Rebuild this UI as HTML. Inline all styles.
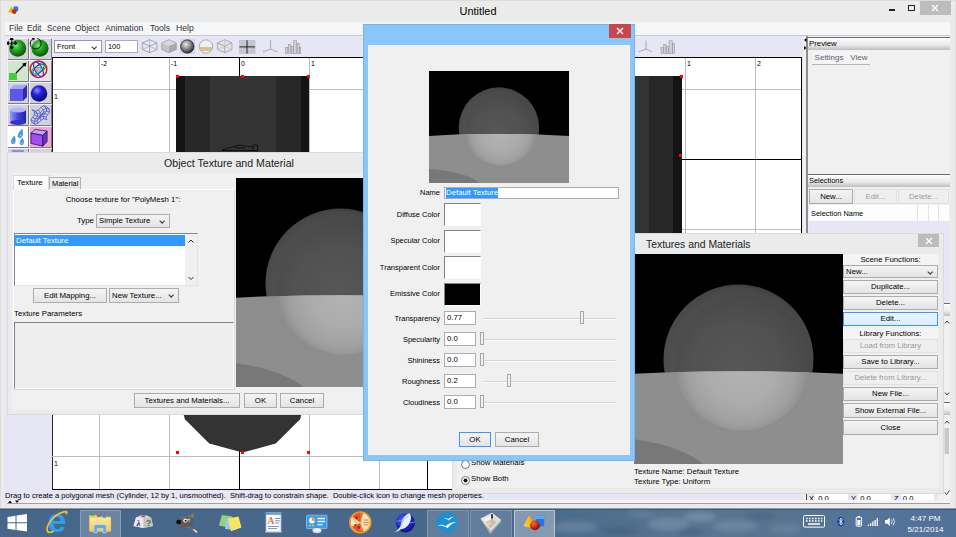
<!DOCTYPE html>
<html><head><meta charset="utf-8">
<style>
*{box-sizing:border-box;margin:0;padding:0}
html,body{width:956px;height:537px;overflow:hidden;background:#4a6c8e;font-family:"Liberation Sans",sans-serif;font-size:7.8px;color:#000}
.a{position:absolute}
.t{position:absolute;white-space:pre;line-height:10px;height:10px}
.c{text-align:center}
.r{text-align:right}
.btn{position:absolute;border:1px solid #acacac;background:linear-gradient(#f4f4f4,#e4e4e4);text-align:center;line-height:12px;white-space:pre}
.btn.dis{color:#9a9a9a;border-color:#e0e0e0;background:#efefef}
.btn.hot{border-color:#3399ff;background:linear-gradient(#ecf4fc,#dcecfc)}
.tf{position:absolute;border:1px solid #abadb3;background:#fff;line-height:11px;padding-left:2px;white-space:pre}
.cb{position:absolute;border:1px solid #acacac;background:linear-gradient(#f4f4f4,#e4e4e4);line-height:12px;padding-left:2px;white-space:pre}
.cb:after{content:"";position:absolute;right:4.5px;top:3.5px;width:3.4px;height:3.4px;border-right:1px solid #333;border-bottom:1px solid #333;transform:rotate(45deg) scale(1,1)}
.gl{position:absolute;background:#bcbcbc}
.ph{position:absolute;height:13px;background:linear-gradient(#fdfdfd,#e9e9e9 60%,#bdbdbd);border-top:1px solid #6e6e6e;line-height:12px;padding-left:1px;white-space:pre}
.tb{position:absolute;width:22px;height:22px;background:#d2d2d8;border:1px solid;border-color:#f4f4f8 #777 #777 #f4f4f8}
.sw{position:absolute;width:27px;height:17px;border:1px solid #7a7a7a;border-right-color:#d0d0d0;border-bottom-color:#d0d0d0;background:#fff}
.trk{position:absolute;height:1px;background:#d6d6d6;border-bottom:1px solid #fcfcfc;box-sizing:content-box}
.thm{position:absolute;width:4px;height:13px;border:1px solid #a6a6a6;background:#f2f2f2}
</style></head>
<body>
<!-- sphere scene symbol -->
<svg width="0" height="0" style="position:absolute">
<defs>
<radialGradient id="gU" gradientUnits="userSpaceOnUse" cx="102" cy="116" r="86">
<stop offset="0" stop-color="#5b5b5b"/><stop offset="0.5" stop-color="#555"/><stop offset="0.82" stop-color="#4d4d4d"/><stop offset="0.95" stop-color="#474747"/><stop offset="1" stop-color="#3e3e3e"/>
</radialGradient>
<radialGradient id="gL" gradientUnits="userSpaceOnUse" cx="108" cy="115" r="68">
<stop offset="0" stop-color="#b3b3b3"/><stop offset="0.5" stop-color="#acacac"/><stop offset="0.8" stop-color="#a0a0a0"/><stop offset="0.93" stop-color="#939393"/><stop offset="1" stop-color="#898989"/>
</radialGradient>
<radialGradient id="gR" gradientUnits="userSpaceOnUse" cx="104.5" cy="105.5" r="75">
<stop offset="0.86" stop-color="#fff" stop-opacity="0"/><stop offset="0.97" stop-color="#fff" stop-opacity="0.07"/><stop offset="1" stop-color="#fff" stop-opacity="0.02"/>
</radialGradient>
<clipPath id="cSky"><path d="M-30,121.9 Q104.5,112.4 240,121.9 L240,0 L-30,0Z"/></clipPath>
<clipPath id="cGnd"><path d="M-30,121.9 Q104.5,112.4 240,121.9 L240,210 L-30,210Z"/></clipPath>
<clipPath id="cS"><circle cx="104.5" cy="105.5" r="75"/></clipPath>
<filter id="bl2" x="-5%" y="-5%" width="110%" height="110%"><feGaussianBlur stdDeviation="0.7"/></filter>
<filter id="bl" x="-10%" y="-10%" width="120%" height="120%"><feGaussianBlur stdDeviation="1.2"/></filter>
<g id="scene">
<rect x="-30" y="0" width="270" height="210" fill="#000"/>
<path d="M-30,121.6 Q104.5,112.1 240,121.6 L240,210 L-30,210Z" fill="#8e8e8e"/>
<ellipse cx="-40" cy="227.5" rx="118" ry="45" fill="#787878"/>
<g clip-path="url(#cSky)"><circle cx="104.5" cy="105.5" r="75" fill="url(#gU)"/></g>
<g clip-path="url(#cS)">
<circle cx="109" cy="110" r="68" fill="#000" opacity="0.035" filter="url(#bl)"/>
<g clip-path="url(#cGnd)">
<rect x="20" y="100" width="170" height="90" fill="#8d8d8d"/>
<circle cx="108" cy="109" r="67.5" fill="url(#gL)" filter="url(#bl2)"/>
</g>
</g>
</g>
</defs>
</svg>

<!-- ================= MAIN WINDOW ================= -->
<div class="a" id="win" style="left:0;top:0;width:956px;height:509px;background:#ebebeb;box-shadow:inset 0 0 0 1px #dcdcdc"></div>
<div class="t c" style="left:428px;top:4px;width:100px;font-size:10.9px;line-height:14px;height:14px">Untitled</div>
<svg class="a" style="left:7px;top:5px" width="12" height="10" viewBox="0 1.5 15 11"><rect x="8" y="2.5" width="6" height="6" rx="0.8" fill="#2a7ae0"/><path d="M5.5,2.5 L9.5,9.5 q-4,2 -8,0z" fill="#f5b000"/><circle cx="9" cy="9" r="3" fill="#c8281a"/></svg>
<!-- window buttons -->
<div class="a" style="left:920px;top:1px;width:31px;height:14px;background:#bcbcbc"></div>
<svg class="a" style="left:931px;top:4px" width="8" height="8"><path d="M1,1 L7,7 M7,1 L1,7" stroke="#fff" stroke-width="1.4"/></svg>
<div class="a" style="left:908px;top:5px;width:7px;height:6px;border:1px solid #222;border-top-width:1.5px"></div>
<div class="a" style="left:889px;top:9px;width:6px;height:2px;background:#222"></div>
<!-- menubar -->
<div class="a" style="left:5px;top:22px;width:945px;height:13px;background:#f5f6f7"></div>
<div class="t" style="left:9px;top:23px;font-size:8.6px;line-height:11px;color:#333">File</div><div class="t" style="left:27px;top:23px;font-size:8.4px;line-height:11px;color:#333">Edit</div><div class="t" style="left:47px;top:23px;font-size:8.4px;line-height:11px;color:#333">Scene</div><div class="t" style="left:75px;top:23px;font-size:8.4px;line-height:11px;color:#333">Object</div><div class="t" style="left:105px;top:23px;font-size:8.6px;line-height:11px;color:#333">Animation</div><div class="t" style="left:150px;top:23px;font-size:8.6px;line-height:11px;color:#333">Tools</div><div class="t" style="left:176px;top:23px;font-size:8.6px;line-height:11px;color:#333">Help</div>
<!-- content bg -->
<div class="a" style="left:5px;top:35px;width:945px;height:468px;background:#e6e6f5"></div>
<div class="a" style="left:5px;top:35px;width:945px;height:1px;background:#c9c9d4"></div>

<!-- VIEWPORTS -->
<div class="a" id="vp1" style="left:52px;top:57px;width:376px;height:205px;background:#fff;border-top:1px solid #000;overflow:hidden"></div>
<div class="a" id="vp3" style="left:52px;top:284px;width:376px;height:206px;background:#fff;border-bottom:1px solid #000;overflow:hidden"></div>
<div class="a" id="vp4" style="left:428px;top:284px;width:374px;height:206px;background:#fff;border-bottom:1px solid #000"></div>
<div class="a" id="vp2" style="left:428px;top:57px;width:374px;height:205px;background:#fff;border-top:1px solid #000;overflow:hidden"></div>


<!-- VP1 front -->
<div class="gl" style="left:99px;top:58px;width:1px;height:204px"></div>
<div class="gl" style="left:169px;top:58px;width:1px;height:204px"></div>
<div class="gl" style="left:309px;top:58px;width:1px;height:204px"></div>
<div class="gl" style="left:379px;top:58px;width:1px;height:204px"></div>
<div class="gl" style="left:52px;top:89px;width:376px;height:1px"></div>
<div class="a" style="left:239px;top:58px;width:1px;height:204px;background:#000"></div>
<div class="t" style="left:101px;top:59px;font-size:7px">-2</div>
<div class="t" style="left:171px;top:59px;font-size:7px">-1</div>
<div class="t" style="left:241px;top:59px;font-size:7px">0</div>
<div class="t" style="left:311px;top:59px;font-size:7px">1</div>
<div class="t" style="left:54px;top:92px;font-size:7px">1</div>
<div class="a" style="left:176px;top:76px;width:133px;height:167px;background:linear-gradient(90deg,#141414 0,#141414 9px,#282828 9px,#282828 34px,#333 34px,#333 100px,#282828 100px,#282828 125px,#141414 125px)"></div>
<svg class="a" style="left:220px;top:140px" width="42" height="14"><path d="M2,10 L12,7 L19,5 L25,6 L33,7 M33,5 h4.5 v5.5 h-4.5z M2,10.5 L33,10.5 M14,6.5 l3,1.5 l8,0" fill="none" stroke="#000" stroke-width="0.7"/></svg>
<div class="a" style="left:176px;top:75px;width:3px;height:3px;background:#f00"></div>
<div class="a" style="left:241px;top:75px;width:3px;height:3px;background:#f00"></div>
<div class="a" style="left:307px;top:75px;width:3px;height:3px;background:#f00"></div>
<div class="a" style="left:427px;top:57px;width:1px;height:433px;background:#000"></div>
<div class="a" style="left:52px;top:57px;width:1px;height:433px;background:#222"></div>
<!-- VP3 top -->
<div class="gl" style="left:99px;top:284px;width:1px;height:205px"></div>
<div class="gl" style="left:169px;top:284px;width:1px;height:205px"></div>
<div class="gl" style="left:309px;top:284px;width:1px;height:205px"></div>
<div class="gl" style="left:379px;top:284px;width:1px;height:205px"></div>
<div class="gl" style="left:52px;top:456px;width:376px;height:1px"></div>
<div class="a" style="left:239px;top:284px;width:1px;height:205px;background:#000"></div>
<div class="t" style="left:54px;top:459px;font-size:7px">1</div>
<svg class="a" style="left:170px;top:315px" width="146" height="142"><polygon points="72.5,137.5 105.75,128.6 130.1,104.25 139,71 130.1,37.75 105.75,13.4 72.5,4.5 39.25,13.4 14.9,37.75 6,71 14.9,104.25 39.25,128.6" fill="#333"/></svg>
<div class="a" style="left:176px;top:451px;width:3px;height:3px;background:#f00"></div>
<div class="a" style="left:241px;top:451px;width:3px;height:3px;background:#f00"></div>
<div class="a" style="left:307px;top:451px;width:3px;height:3px;background:#f00"></div>
<!-- VP2 side -->
<div class="gl" style="left:685px;top:58px;width:1px;height:204px"></div>
<div class="gl" style="left:755px;top:58px;width:1px;height:204px"></div>
<div class="gl" style="left:430px;top:89px;width:372px;height:1px"></div>
<div class="gl" style="left:430px;top:229px;width:372px;height:1px"></div>
<div class="gl" style="left:430px;top:159px;width:372px;height:1px;background:#000"></div>
<div class="t" style="left:687px;top:59px;font-size:7px">1</div>
<div class="t" style="left:757px;top:59px;font-size:7px">2</div>
<div class="a" style="left:549px;top:76px;width:133px;height:167px;background:linear-gradient(90deg,#141414 0,#141414 9px,#282828 9px,#282828 34px,#333 34px,#333 100px,#282828 100px,#282828 124px,#141414 124px)"></div>
<div class="a" style="left:680px;top:75px;width:3px;height:3px;background:#f00"></div>
<div class="a" style="left:679px;top:154px;width:3px;height:3px;background:#f00"></div>
<div class="a" style="left:801px;top:57px;width:1px;height:433px;background:#000"></div>
<!-- splitter + right panel -->
<div class="a" style="left:803px;top:36px;width:4px;height:467px;background:#f0f0f0"></div>
<div class="a" style="left:806px;top:36px;width:2px;height:467px;background:#8c8c8c"></div>
<div class="a" style="left:808px;top:36px;width:142px;height:467px;background:#f0f0f0"></div>
<svg class="a" style="left:803px;top:37px" width="4" height="14"><path d="M3.5,1 L1,3 L3.5,5Z M1,9 L3.5,11 L1,13Z" fill="#000"/></svg>
<div class="ph" style="left:808px;top:37px;width:142px">Preview</div>
<div class="a" style="left:812px;top:51px;width:58px;height:13px;background:#f4f4f4"></div><div class="t" style="left:814.6px;top:53px;font-size:8px;color:#5a6472">Settings</div><div class="t" style="left:850.3px;top:53px;font-size:8px;color:#5a6472">View</div>
<div class="a" style="left:812px;top:64px;width:58px;height:1px;background:#b4b4b4"></div>
<div class="ph" style="left:808px;top:174px;width:142px;font-size:7.4px">Selections</div>
<div class="btn" style="left:809px;top:189px;width:44px;height:15px;line-height:13px">New...</div>
<div class="btn dis" style="left:854px;top:189px;width:43px;height:15px;line-height:13px">Edit...</div>
<div class="btn dis" style="left:898px;top:189px;width:51px;height:15px;line-height:13px">Delete...</div>
<div class="a" style="left:809px;top:205px;width:140px;height:16px;background:#fdfdfd"></div>
<div class="t" style="left:811px;top:209px;font-size:7.4px">Selection Name</div>
<div class="a" style="left:917px;top:205px;width:1px;height:16px;background:#dfe5f0"></div>
<div class="a" style="left:928px;top:205px;width:1px;height:16px;background:#dfe5f0"></div>
<div class="a" style="left:938px;top:205px;width:1px;height:16px;background:#dfe5f0"></div>
<div class="a" style="left:809px;top:221px;width:141px;height:270px;background:#e6e6f5"></div>

<!-- TOOLBAR -->
<div class="cb" style="left:54px;top:40px;width:48px;height:13px;line-height:11px;background:#fff;border-color:#9a9aa6">Front</div>
<div class="tf" style="left:105px;top:40px;width:33px;height:13px;font-size:7.4px">100</div>
<svg class="a" style="left:140px;top:37.6px" width="165" height="19" fill="none">
<g stroke="#8c8c8c" stroke-width="0.7"><path d="M9.6,1.7 L17.0,4.9 L17.0,11.5 L9.6,14.7 L2.4,11.5 L2.4,4.9Z M2.4,4.9 L9.6,8.1 L17.0,4.9 M9.6,8.1 L9.6,14.7"/><path d="M9.6,1.7 L9.6,8.3 L2.4,11.5 M9.6,8.3 L17.0,11.5" stroke-opacity="0.6"/></g>
<path d="M28.9,1.7 L36.3,4.9 L28.9,8.1 L21.7,4.9Z" fill="#dadada"/><path d="M21.7,4.9 L28.9,8.1 L28.9,14.7 L21.7,11.5Z" fill="#c4c4c4"/><path d="M36.3,4.9 L28.9,8.1 L28.9,14.7 L36.3,11.5Z" fill="#ababab"/><path d="M28.9,1.7 L36.3,4.9 L36.3,11.5 L28.9,14.7 L21.7,11.5 L21.7,4.9Z" stroke="#8c8c8c" stroke-width="0.6"/>
<rect x="39.8" y="1.2" width="15.2" height="14.8" fill="#d6d6e2"/><circle cx="47.3" cy="8.5" r="6.7" fill="url(#gSph)" stroke="#1a1a1a" stroke-width="0.7"/>
<clipPath id="hsC"><circle cx="66" cy="8.5" r="6.5"/></clipPath><circle cx="66" cy="8.5" r="6.7" fill="#eef2f6" stroke="#8c8c8c" stroke-width="0.7"/><rect x="59" y="9" width="14" height="4" fill="#d9c08e" clip-path="url(#hsC)"/>
<path d="M84.6,1.7 L92.0,4.9 L92.0,11.5 L84.6,14.7 L77.4,11.5 L77.4,4.9Z" fill="#e2e2e4" stroke="#9a9a9a" stroke-width="0.7"/><path d="M77.4,4.9 L84.6,8.1 L92.0,4.9 M84.6,8.1 L84.6,14.7" stroke="#9a9a9a" stroke-width="0.7"/><path d="M84.6,1.7 L84.6,8.3 L77.4,11.5 M84.6,8.3 L92.0,11.5" stroke="#b8b8b8" stroke-width="0.5"/>
<path d="M99.8,2.2V15.6M101.5,2.2V15.6M103.2,2.2V15.6M104.9,2.2V15.6M106.6,2.2V15.6M108.3,2.2V15.6M110.0,2.2V15.6M111.7,2.2V15.6M113.4,2.2V15.6M115.1,2.2V15.6M99.4,2.6H115M99.4,4.2H115M99.4,5.8H115M99.4,7.4H115M99.4,9.0H115M99.4,10.6H115M99.4,12.2H115M99.4,13.8H115M99.4,15.4H115" stroke="#9a9a9a" stroke-width="0.4"/><path d="M99.4,8.9H115M107,2.2V15.6" stroke="#111" stroke-width="0.9"/>
<path d="M130.6,2.6V11L123.4,13.8M130.6,11L136.4,13.8" stroke="#9a9a9a" stroke-width="0.8"/><path d="M129.8,2.6h1.6M123,13h1v1.4M136,13h1v1.4" stroke="#aaa" stroke-width="0.6"/>
<g fill="#c4c4c8" fill-opacity="0.7" stroke="#8e8e8e" stroke-width="0.5"><rect x="145.6" y="9.5" width="2.2" height="6"/><rect x="148.4" y="6.5" width="2.2" height="9"/><rect x="151.2" y="8.5" width="2" height="7"/><rect x="153.6" y="2.8" width="3.2" height="12.8"/><rect x="157.2" y="5.5" width="2" height="10"/><rect x="159.4" y="9.5" width="1.4" height="6"/></g>
</svg>
<!-- VP2 toolbar icons (visible part) -->
<svg class="a" style="left:636px;top:37.6px" width="40" height="19" fill="none"><path d="M10,2.6V11L2.8,13.8M10,11L15.8,13.8" stroke="#9a9a9a" stroke-width="0.8"/><g fill="#c4c4c8" fill-opacity="0.7" stroke="#8e8e8e" stroke-width="0.5"><rect x="25" y="9.5" width="2.2" height="6"/><rect x="27.8" y="6.5" width="2.2" height="9"/><rect x="30.6" y="8.5" width="2" height="7"/><rect x="33" y="2.8" width="3.2" height="12.8"/><rect x="36.6" y="5.5" width="2" height="10"/></g></svg>
<!-- TOOL PALETTE -->
<div class="a" style="left:7px;top:38px;width:45px;height:118px;background:#d2d2d8"></div>
<svg class="a" style="left:7px;top:38px" width="45" height="120">
<defs>
<radialGradient id="gSph" cx="0.4" cy="0.35" r="0.7"><stop offset="0" stop-color="#e8e8e8"/><stop offset="0.5" stop-color="#888"/><stop offset="1" stop-color="#222"/></radialGradient>
<radialGradient id="gGr" cx="0.4" cy="0.35" r="0.7"><stop offset="0" stop-color="#7be07b"/><stop offset="0.45" stop-color="#1fa01f"/><stop offset="1" stop-color="#064d06"/></radialGradient>
<radialGradient id="gBl" cx="0.38" cy="0.32" r="0.7"><stop offset="0" stop-color="#8c8cff"/><stop offset="0.4" stop-color="#2222dd"/><stop offset="1" stop-color="#0a0a70"/></radialGradient>
<linearGradient id="gCy" x1="0" x2="1"><stop offset="0" stop-color="#9a9aff"/><stop offset="0.5" stop-color="#4444dd"/><stop offset="1" stop-color="#2020a0"/></linearGradient>
</defs>
<!-- button frames -->
<g fill="none" stroke-width="1">
<path d="M0.5,21.5V0.5H21.5 M22.5,21.5V0.5H44 M0.5,43.5V22.5H21.5 M22.5,43.5V22.5H44 M0.5,65.5V44.5H21.5 M22.5,65.5V44.5H44 M0.5,87.5V66.5H21.5 M22.5,87.5V66.5H44 M0.5,109.5V88.5H21.5 M22.5,109.5V88.5H44 M0.5,120V110.5H21.5 M22.5,120V110.5H44" stroke="#f2f2f6"/>
<path d="M21.5,1V21.5H1 M44.5,1V21.5H23 M21.5,23V43.5H1 M44.5,23V43.5H23 M21.5,45V65.5H1 M44.5,45V65.5H23 M21.5,67V87.5H1 M44.5,67V87.5H23 M21.5,89V109.5H1 M44.5,89V109.5H23 M21.5,111V120 M44.5,111V120" stroke="#7c7c84"/>
</g>
<!-- r1 -->
<g transform="translate(-1.3,-1.8)"><circle cx="12" cy="12" r="8.5" fill="url(#gGr)"/>
<path d="M6,2 V12 M1.5,7 H10.5 M6,1 l-1.6,2.2 h3.2z M6,13 l-1.6,-2.2 h3.2z M0.5,7 l2.2,-1.6 v3.2z M11.5,7 l-2.2,-1.6 v3.2z" stroke="#000" stroke-width="0.9" fill="#000"/>
<circle cx="34.3" cy="12" r="8.5" fill="url(#gGr)"/>
<path transform="translate(-1.5,0)" d="M27.5,3.5 A5.5,5.5 0 1 0 33,2" stroke="#000" stroke-width="0.9" fill="none"/><path d="M26,1.5 l3.5,0.5 l-2.2,2.6z" fill="#000"/>
</g>
<!-- r2 -->
<rect x="1" y="23" width="20" height="20" fill="#cfe6cf"/>
<rect x="2" y="35" width="8" height="7" fill="#3fcf3f"/>
<path d="M9,35 L18,26" stroke="#000" stroke-width="1.2"/><path d="M19.5,24.5 l-4.5,1.2 l3.3,3.3z" fill="#000"/>
<rect x="23" y="23" width="21" height="20" fill="#e4e4ea"/>
<g transform="translate(-2,-1.8)"><circle cx="33.5" cy="33" r="8.3" fill="none" stroke="#e01818" stroke-width="1.5"/>
<ellipse cx="33.5" cy="33" rx="3.6" ry="8" fill="none" stroke="#2030d8" stroke-width="1.1" transform="rotate(-28 33.5 33)"/>
<ellipse cx="33.5" cy="33" rx="8" ry="3.4" fill="none" stroke="#18a018" stroke-width="1.1" transform="rotate(-28 33.5 33)"/>
<ellipse cx="33.5" cy="33" rx="3.4" ry="8" fill="none" stroke="#2030d8" stroke-width="0.9" transform="rotate(40 33.5 33)"/>
<rect x="31.5" y="31" width="4" height="4" fill="#bbb" stroke="#777" stroke-width="0.5"/>
</g>
<!-- r3 -->
<path d="M3,51 L7,47 L20,47 L16,51Z" fill="#a6a6ff"/><rect x="3" y="51" width="13" height="12" fill="#5a5ae6"/><path d="M16,51 L20,47 L20,59 L16,63Z" fill="#2c2cb0"/>
<circle cx="32" cy="55.5" r="8.3" fill="url(#gBl)"/>
<!-- r4 -->
<rect x="3" y="72" width="16" height="12.5" fill="url(#gCy)"/><ellipse cx="11" cy="84.5" rx="8" ry="2.4" fill="#3535c4"/><ellipse cx="11" cy="72" rx="8" ry="2.6" fill="#b4b4ff"/>
<g stroke="#3a4ad0" stroke-width="0.75" fill="none"><path d="M25.0,71.5 L26.2,72.3 L27.5,72.8 L28.8,73.0 L30.0,72.7 L31.2,71.9 L32.5,70.8 L33.8,69.6 L35.0,68.7 L36.2,68.0 L37.5,67.9 L38.8,68.3 L40.0,68.9 M27.3,74.1 L28.5,74.9 L29.8,75.4 L31.0,75.6 L32.3,75.3 L33.5,74.5 L34.8,73.4 L36.0,72.2 L37.3,71.3 L38.5,70.6 L39.8,70.5 L41.0,70.9 L42.3,71.5 M27.4,76.7 L28.6,77.5 L29.9,78.0 L31.1,78.2 L32.4,77.9 L33.6,77.1 L34.9,76.0 L36.1,74.8 L37.4,73.9 L38.6,73.2 L39.9,73.1 L41.1,73.5 L42.4,74.1 M25.6,79.3 L26.8,80.1 L28.1,80.6 L29.3,80.8 L30.6,80.5 L31.8,79.7 L33.1,78.6 L34.3,77.4 L35.6,76.5 L36.8,75.8 L38.1,75.7 L39.3,76.1 L40.6,76.7 M24.1,81.9 L25.4,82.7 L26.6,83.2 L27.9,83.4 L29.1,83.1 L30.4,82.3 L31.6,81.2 L32.9,80.0 L34.1,79.1 L35.4,78.4 L36.6,78.3 L37.9,78.7 L39.1,79.3 M24.9,84.5 L26.2,85.3 L27.4,85.8 L28.7,86.0 L29.9,85.7 L31.2,84.9 L32.4,83.8 L33.7,82.6 L34.9,81.7 L36.2,81.0 L37.4,80.9 L38.7,81.3 L39.9,81.9 M25.0,71.5 L26.1,72.6 L27.0,73.7 L27.5,74.8 L27.6,75.8 L27.3,76.9 L26.6,78.0 L25.7,79.1 L24.9,80.2 L24.3,81.2 L24.1,82.3 L24.3,83.4 L24.9,84.5 M28.0,73.0 L29.1,74.0 L30.0,75.1 L30.5,76.2 L30.6,77.3 L30.3,78.4 L29.6,79.5 L28.7,80.5 L27.9,81.6 L27.3,82.7 L27.1,83.8 L27.3,84.9 L27.9,86.0 M31.0,72.1 L32.1,73.1 L33.0,74.2 L33.5,75.3 L33.6,76.4 L33.3,77.5 L32.6,78.6 L31.7,79.6 L30.9,80.7 L30.3,81.8 L30.1,82.9 L30.3,84.0 L30.9,85.1 M34.0,69.4 L35.1,70.5 L36.0,71.6 L36.5,72.7 L36.6,73.7 L36.3,74.8 L35.6,75.9 L34.7,77.0 L33.9,78.1 L33.3,79.2 L33.1,80.2 L33.3,81.3 L33.9,82.4 M37.0,67.9 L38.1,69.0 L39.0,70.1 L39.5,71.2 L39.6,72.2 L39.3,73.3 L38.6,74.4 L37.7,75.5 L36.9,76.6 L36.3,77.7 L36.1,78.7 L36.3,79.8 L36.9,80.9 M40.0,68.9 L41.1,70.0 L42.0,71.1 L42.5,72.2 L42.6,73.3 L42.3,74.4 L41.6,75.4 L40.7,76.5 L39.9,77.6 L39.3,78.7 L39.1,79.8 L39.3,80.9 L39.9,81.9"/></g>
<!-- r5 -->
<rect x="1" y="89" width="20" height="20" fill="#fff"/>
<path d="M15.5,90.5 q-6,5 -4.6,8.6 q2.6,2.6 4.6,-1 q1,-3 0,-7.6z M7.5,97.5 q-4.6,4.6 -3.2,7.8 q2.6,2.4 4.2,-1 q0.8,-3 -1,-6.8z M15.6,99.5 q-3.8,4 -2.6,6.8 q2.4,2.2 3.8,-0.8 q0.6,-2.8 -1.2,-6z" fill="#4a9ae6"/><path d="M12.4,96.5 q0.6,1.6 2,1 M5.6,103.4 q0.6,1.4 1.8,1 M14,104.6 q0.6,1.2 1.6,0.8" stroke="#bfe0ff" stroke-width="0.7" fill="none"/>
<rect x="23" y="89" width="21" height="20" fill="#f4a6d4"/>
<g transform="translate(-2.5,0.5) translate(34.5,99) scale(1.08) translate(-34.5,-99)"><path d="M27,95 L31,91.5 L42,93 L38,97Z" fill="#c9a0ff" stroke="#201060" stroke-width="0.7"/><path d="M27,95 L38,97 L38,107 L27,104.5Z" fill="#a050f0" stroke="#201060" stroke-width="0.7"/><path d="M38,97 L42,93 L42,103 L38,107Z" fill="#7030c0" stroke="#201060" stroke-width="0.7"/>
</g>
<!-- r6 partial -->
<rect x="5" y="112" width="12" height="8" fill="#8a8aee"/>
</svg>


<!-- right strip details -->
<div class="a" style="left:809px;top:303px;width:141px;height:200px;background:#f0f0f0"></div>
<div class="ph" style="left:808px;top:303px;width:142px"></div>
<div class="ph" style="left:808px;top:402px;width:142px"></div>
<svg class="a" style="left:944px;top:316px" width="6" height="184" fill="none" stroke="#333" stroke-width="0.9"><path d="M1,7.5 L3,5 L5,7.5 M1,76.5 L3,79 L5,76.5 M1,107.5 L3,105 L5,107.5 M0.8,176.5 L2.6,178.5 L5.4,174.5"/><rect x="0.5" y="112" width="4.5" height="26" fill="#c8c8c8" stroke="none"/></svg>
<!-- xyz fields -->
<div class="a" style="left:807px;top:493px;width:131px;height:7px;background:#e6e6f5;overflow:hidden">
<div class="a" style="left:8px;top:0;width:33px;height:7px;background:#fff"></div>
<div class="a" style="left:51px;top:0;width:33px;height:7px;background:#fff"></div>
<div class="a" style="left:94px;top:0;width:33px;height:7px;background:#fff"></div>
<div class="t" style="left:2px;top:1px;font-size:7.6px">X  0.0</div>
<div class="t" style="left:44px;top:1px;font-size:7.6px">Y  0.0</div>
<div class="t" style="left:87px;top:1px;font-size:7.6px">Z  0.0</div>
</div>
<div class="a" style="left:806px;top:493px;width:1px;height:7px;background:#444"></div>

<!-- statusbar -->
<div class="a" style="left:7px;top:490px;width:796px;height:10px;background:#e6e6f5"></div>
<div class="t" style="left:5px;top:490.5px;font-size:7.57px">Drag to create a polygonal mesh (Cylinder, 12 by 1, unsmoothed).  Shift-drag to constrain shape.  Double-click icon to change mesh properties.</div>
<div class="a" style="left:7px;top:500px;width:943px;height:3px;background:#f4f4f4"></div>
<div class="a" style="left:7px;top:503px;width:943px;height:1px;background:#a0a0a0"></div>
<svg class="a" style="left:8px;top:500px" width="14" height="4"><path d="M0,3 L2,0.5 L4,3Z M7,0.5 L11,0.5 L9,3Z" fill="#000"/></svg>


<!-- ============ DIALOG 1: Object Texture and Material ============ -->
<div class="a" style="left:7px;top:152px;width:445px;height:263px;background:#ebebeb;border:1px solid #dadada"></div>
<div class="a" style="left:12px;top:173px;width:435px;height:237px;background:#f0f0f0"></div>
<div class="t c" style="left:129px;top:156px;width:200px;font-size:10.65px;line-height:14px;height:14px;color:#222">Object Texture and Material</div>
<!-- tabs -->
<div class="a" style="left:13px;top:189px;width:222px;height:201px;border:1px solid #d9d9d9;border-top-color:#fff;border-left-color:#fff;background:#f0f0f0"></div>
<div class="a" style="left:13px;top:175px;width:36px;height:15px;background:linear-gradient(#fff,#f6f6f6);border:1px solid #d9d9d9;border-bottom:none"></div>
<div class="a" style="left:49px;top:177px;width:32px;height:12px;background:linear-gradient(#f0f0f0,#e4e4e4);border:1px solid #b4b4b4;border-bottom:none"></div>
<div class="t" style="left:17px;top:178px">Texture</div>
<div class="t" style="left:52px;top:179px;font-size:7.4px">Material</div>
<div class="t c" style="left:23px;top:195px;width:200px">Choose texture for "PolyMesh 1":</div>
<div class="t" style="left:77px;top:216px">Type</div>
<div class="cb" style="left:96px;top:214px;width:74px;height:14px">Simple Texture</div>
<!-- list -->
<div class="a" style="left:14px;top:233px;width:184px;height:53px;background:#fff;border:1px solid;border-color:#828790 #e3e3e3 #e3e3e3 #828790"></div>
<div class="a" style="left:15px;top:235px;width:170px;height:11px;background:#3399ff"></div>
<div class="t" style="left:16px;top:236px;color:#fff">Default Texture</div>
<div class="a" style="left:185px;top:234px;width:12px;height:51px;background:#f0f0f0"></div>
<svg class="a" style="left:187px;top:238px" width="8" height="44" fill="none" stroke="#333" stroke-width="1"><path d="M1.5,4.5 L4,2 L6.5,4.5 M1.5,39 L4,41.5 L6.5,39"/></svg>
<div class="btn" style="left:33px;top:288px;width:74px;height:15px;line-height:13px">Edit Mapping...</div>
<div class="cb" style="left:109px;top:288px;width:70px;height:15px;line-height:13px">New Texture...</div>
<div class="t" style="left:14px;top:309px">Texture Parameters</div>
<div class="a" style="left:14px;top:322px;width:220px;height:67px;background:#eee;border:1px solid;border-color:#828282 #fff #fff #828282"></div>
<!-- preview -->
<svg class="a" style="left:236px;top:178px" width="209" height="209" viewBox="0 0 209 209"><use href="#scene"/></svg>
<div class="btn" style="left:134px;top:393px;width:106px;height:15px;line-height:13px">Textures and Materials...</div>
<div class="btn" style="left:244px;top:393px;width:33px;height:15px;line-height:13px">OK</div>
<div class="btn" style="left:280px;top:393px;width:44px;height:15px;line-height:13px">Cancel</div>


<!-- ============ DIALOG 2: Textures and Materials ============ -->
<div class="a" style="left:452px;top:233px;width:492px;height:261px;background:#ebebeb;border:1px solid #dadada"></div>
<div class="a" style="left:457px;top:254px;width:482px;height:234px;background:#f0f0f0"></div>
<div class="t" style="left:646px;top:237.8px;font-size:10.4px;line-height:14px;height:14px;color:#222">Textures and Materials</div>
<div class="a" style="left:918px;top:234px;width:21px;height:13px;background:#bcbcbc"></div>
<svg class="a" style="left:925px;top:237px" width="8" height="8"><path d="M1,1 L7,7 M7,1 L1,7" stroke="#fff" stroke-width="1.3"/></svg>
<svg class="a" style="left:634px;top:254px" width="209" height="210" viewBox="0 0 209 210"><use href="#scene"/></svg>
<div class="t" style="left:634px;top:466.5px">Texture Name: Default Texture</div>
<div class="t" style="left:634px;top:476.5px">Texture Type: Uniform</div>
<!-- radios -->
<svg class="a" style="left:459.5px;top:458.5px" width="12" height="28"><circle cx="5.5" cy="5.5" r="4" fill="#fff" stroke="#555" stroke-width="0.8"/><circle cx="5.5" cy="21.5" r="4" fill="#fff" stroke="#555" stroke-width="0.8"/><circle cx="5.5" cy="21.5" r="2" fill="#111"/></svg>
<div class="t" style="left:471px;top:458px">Show Materials</div>
<div class="t" style="left:471px;top:474px">Show Both</div>
<!-- buttons -->
<div class="t c" style="left:843px;top:254px;width:95px;height:11px;line-height:11px;background:#f4f4f4">Scene Functions:</div>
<div class="cb" style="left:843px;top:265px;width:95px;height:13px;line-height:11px">New...</div>
<div class="btn" style="left:843px;top:280px;width:95px;height:14px">Duplicate...</div>
<div class="btn" style="left:843px;top:296px;width:95px;height:14px">Delete...</div>
<div class="btn hot" style="left:843px;top:312px;width:95px;height:14px">Edit...</div>
<div class="t c" style="left:843px;top:328px;width:95px;height:11px;line-height:11px;background:#f4f4f4">Library Functions:</div>
<div class="btn dis" style="left:843px;top:339px;width:95px;height:14px">Load from Library</div>
<div class="btn" style="left:843px;top:355px;width:95px;height:14px">Save to Library...</div>
<div class="btn dis" style="left:843px;top:371px;width:95px;height:14px">Delete from Library...</div>
<div class="btn" style="left:843px;top:387px;width:95px;height:14px">New File...</div>
<div class="btn" style="left:843px;top:403px;width:95px;height:15px;line-height:13px">Show External File...</div>
<div class="btn" style="left:843px;top:420px;width:95px;height:15px;line-height:13px">Close</div>

<!-- ============ DIALOG 3: Edit texture (active) ============ -->
<div class="a" style="left:363px;top:24px;width:272px;height:437px;background:#8bc6f8;border:1px solid #78b4ec"></div>
<div class="a" style="left:368px;top:45px;width:262px;height:410px;background:#f0f0f0"></div>
<div class="a" style="left:609px;top:24px;width:22px;height:14px;background:#c8474d"></div>
<svg class="a" style="left:616px;top:27px" width="8" height="8"><path d="M1,1 L7,7 M7,1 L1,7" stroke="#fff" stroke-width="1.4"/></svg>
<svg class="a" style="left:429px;top:71px" width="140" height="112" viewBox="-26 0 261.25 209" preserveAspectRatio="none"><use href="#scene"/></svg>
<div class="t r" style="font-size:7.5px;left:340px;top:188px;width:100px">Name</div>
<div class="tf" style="left:444px;top:187px;width:175px;height:12px;line-height:10px;padding-left:1px"><span style="background:#3399ff;color:#fff;display:inline-block;height:10px">Default Texture</span></div>
<div class="t r" style="font-size:7.5px;left:340px;top:210px;width:100px">Diffuse Color</div>
<div class="a" style="left:444px;top:203px;width:37px;height:23px;background:#fff;border:1px solid;border-color:#828282 #fbfbfb #fbfbfb #828282"></div>
<div class="t r" style="font-size:7.5px;left:340px;top:236px;width:100px">Specular Color</div>
<div class="a" style="left:444px;top:230px;width:37px;height:23px;background:#fff;border:1px solid;border-color:#828282 #fbfbfb #fbfbfb #828282"></div>
<div class="t r" style="font-size:7.5px;left:340px;top:263px;width:100px">Transparent Color</div>
<div class="a" style="left:444px;top:256px;width:37px;height:23px;background:#fff;border:1px solid;border-color:#828282 #fbfbfb #fbfbfb #828282"></div>
<div class="t r" style="font-size:7.5px;left:340px;top:289px;width:100px">Emissive Color</div>
<div class="a" style="left:444px;top:283px;width:37px;height:23px;background:#000;border:1px solid;border-color:#828282 #fbfbfb #fbfbfb #828282"></div>
<div class="t r" style="font-size:7.5px;left:340px;top:314px;width:100px">Transparency</div><div class="tf" style="left:444px;top:311px;width:32px;height:14px;line-height:12px">0.77</div><div class="trk" style="left:483px;top:318px;width:133px"></div><div class="thm" style="left:580px;top:311px"></div>
<div class="t r" style="font-size:7.5px;left:340px;top:335px;width:100px">Specularity</div><div class="tf" style="left:444px;top:332px;width:32px;height:14px;line-height:12px">0.0</div><div class="trk" style="left:483px;top:339px;width:133px"></div><div class="thm" style="left:480px;top:332px"></div>
<div class="t r" style="font-size:7.5px;left:340px;top:356px;width:100px">Shininess</div><div class="tf" style="left:444px;top:353px;width:32px;height:14px;line-height:12px">0.0</div><div class="trk" style="left:483px;top:360px;width:133px"></div><div class="thm" style="left:480px;top:353px"></div>
<div class="t r" style="font-size:7.5px;left:340px;top:377px;width:100px">Roughness</div><div class="tf" style="left:444px;top:374px;width:32px;height:14px;line-height:12px">0.2</div><div class="trk" style="left:483px;top:381px;width:133px"></div><div class="thm" style="left:507px;top:374px"></div>
<div class="t r" style="font-size:7.5px;left:340px;top:398px;width:100px">Cloudiness</div><div class="tf" style="left:444px;top:395px;width:32px;height:14px;line-height:12px">0.0</div><div class="trk" style="left:483px;top:402px;width:133px"></div><div class="thm" style="left:480px;top:395px"></div>
<div class="btn" style="left:459px;top:432px;width:32px;height:15px;line-height:13px;border-color:#3399ff">OK</div>
<div class="btn" style="left:495px;top:432px;width:44px;height:15px;line-height:13px">Cancel</div>

<!-- TASKBAR -->
<div class="a" id="task" style="left:0;top:509px;width:956px;height:28px;background:linear-gradient(90deg,#46678a 0,#48698c 55%,#4e6d8c 62%,#587591 72%,#56748f 82%,#54749a 90%,#52729a 100%)"></div>
<div class="a" style="left:0;top:508px;width:956px;height:1px;background:#8a9aac"></div><div class="a" style="left:0;top:509px;width:956px;height:1px;background:#3e5a78"></div>
<svg class="a" style="left:0;top:508px" width="956" height="29" viewBox="0 508 956 29">
<defs>
<filter id="cb" x="-20%" y="-50%" width="140%" height="200%"><feGaussianBlur stdDeviation="5"/></filter>
<radialGradient id="ieG" cx="0.4" cy="0.3" r="0.8"><stop offset="0" stop-color="#7fd4ff"/><stop offset="1" stop-color="#1e8fe0"/></radialGradient>
<linearGradient id="foG" x1="0" x2="0" y1="0" y2="1"><stop offset="0" stop-color="#fbe9a4"/><stop offset="1" stop-color="#eec85c"/></linearGradient>
<radialGradient id="smG" cx="0.4" cy="0.35" r="0.75"><stop offset="0" stop-color="#5a6af0"/><stop offset="0.6" stop-color="#1a22b8"/><stop offset="1" stop-color="#0a1070"/></radialGradient>
<radialGradient id="rdG" cx="0.35" cy="0.3" r="0.8"><stop offset="0" stop-color="#f06a4a"/><stop offset="0.6" stop-color="#c0200e"/><stop offset="1" stop-color="#7a0c04"/></radialGradient>
<linearGradient id="cnG" x1="0" x2="1"><stop offset="0" stop-color="#ffd84a"/><stop offset="0.5" stop-color="#ffb400"/><stop offset="1" stop-color="#e08a00"/></linearGradient>
</defs>
<!-- clouds -->
<filter id="cb2" x="-30%" y="-80%" width="160%" height="260%"><feGaussianBlur stdDeviation="2.5"/></filter>
<g filter="url(#cb2)" opacity="0.5">
<ellipse cx="575" cy="527" rx="22" ry="6" fill="#7a93ab"/>
<ellipse cx="620" cy="531" rx="18" ry="4" fill="#3f5a76"/>
<ellipse cx="668" cy="524" rx="20" ry="7" fill="#8099b0"/>
<ellipse cx="700" cy="517" rx="16" ry="5" fill="#8aa1b8"/>
<ellipse cx="690" cy="532" rx="14" ry="4" fill="#40597a"/>
<ellipse cx="735" cy="526" rx="22" ry="6" fill="#7d96ae"/>
<ellipse cx="760" cy="516" rx="14" ry="4" fill="#415c7a"/>
<ellipse cx="785" cy="529" rx="16" ry="5" fill="#728ca6"/>
<ellipse cx="640" cy="514" rx="14" ry="3" fill="#6f89a3"/>
</g>
<!-- highlights -->
<rect x="80.5" y="510.5" width="40" height="27" fill="#fff" fill-opacity="0.2" stroke="#fff" stroke-opacity="0.3"/>
<rect x="427.5" y="510.5" width="41" height="27" fill="#fff" fill-opacity="0.14" stroke="#fff" stroke-opacity="0.25"/>
<rect x="470.5" y="510.5" width="41" height="27" fill="#fff" fill-opacity="0.14" stroke="#fff" stroke-opacity="0.25"/>
<rect x="514.5" y="510.5" width="40" height="27" fill="#fff" fill-opacity="0.32" stroke="#fff" stroke-opacity="0.55"/>
<!-- start -->
<path d="M7.5,517 L15.5,515.8 V522.3 H7.5Z M16.5,515.6 L27,514 V522.3 H16.5Z M7.5,523.3 H15.5 V529.9 L7.5,528.7Z M16.5,523.3 H27 V531.6 L16.5,530Z" fill="#fff"/>
<!-- IE -->
<linearGradient id="ieL" x1="0" x2="0" y1="0" y2="1"><stop offset="0" stop-color="#6cc8ff"/><stop offset="1" stop-color="#1a8ae0"/></linearGradient>
<text x="47.4" y="532.3" font-family="Liberation Sans" font-weight="bold" font-size="32.5" fill="#2aa0ee" textLength="19" lengthAdjust="spacingAndGlyphs">e</text>
<path d="M66.2,513.6 q2.2,-2.6 -2.2,-1.8 q-8,1.8 -13.6,9.4 q-4.6,6.6 -3,10 q1.4,2.2 5.6,0.2" fill="none" stroke="#f2c12a" stroke-width="1.7" stroke-linecap="round"/>
<!-- Explorer -->
<path d="M89,516.5 q0,-1.5 1.5,-1.5 h6 l1.5,1.6 h11.5 q1.6,0 1.6,1.6 v13 h-22z" fill="#e9c463"/>
<rect x="90" y="517.6" width="20.5" height="14" fill="url(#foG)"/>
<rect x="91" y="514.2" width="3" height="1.6" fill="#3db34a"/><rect x="97" y="515.2" width="3" height="1.6" fill="#e8463c"/><rect x="103" y="516.2" width="3" height="1.6" fill="#3a8ee6"/>
<path d="M94,533 v-6.5 q0,-1.8 1.8,-1.8 h8.6 q1.8,0 1.8,1.8 v6.5 h-3.2 v-4.6 h-5.8 v4.6z" fill="#5ea8e0" stroke="#c8e2f6" stroke-width="0.6"/>
<!-- lambda cube -->
<path d="M136,517.5 L140,515.5 H147 L151,517.5 L153,526 L143.5,528 L133.5,526Z" fill="#d8d8d8"/>
<path d="M143.5,518 L143.5,528 L133.5,526 L136,517.5Z" fill="#ececec"/>
<path d="M143.5,518 L151,517.5 L153,526 L143.5,528Z" fill="#c2c2c2"/>
<rect x="141.5" y="515.8" width="3.5" height="1.4" fill="#d04040"/>
<text x="136.5" y="526" font-family="Liberation Serif" font-size="9" font-weight="bold" font-style="italic" fill="#2a2ab0">λ</text>
<text x="146" y="526" font-family="Liberation Sans" font-size="8.5" font-weight="bold" fill="#2a8a2a">?</text>
<!-- gimp -->
<path d="M180.5,517.5 q3,-1.5 6,-0.8 q3,-1 5.5,-3 q1.5,-1.4 2,0 q0.8,5 -1,8.5 q-1.6,3.4 -5.5,4.6 q-5,1.2 -8.5,-1 q-3,-2.4 -1.5,-5.6 q1,-2 3,-2.7z" fill="#5c5a55"/>
<path d="M180.5,517.5 q3,-1.5 6,-0.8 q3,-1 5.5,-3 q1.5,-1.4 2,0 q0.4,2.6 0,5 q-3,-2.4 -7,-1.6 q-4,0.4 -7,3 q0.2,-1.8 0.5,-2.6z" fill="#7a776f"/>
<ellipse cx="178.8" cy="522" rx="2.6" ry="2.2" fill="#0c0c0c"/>
<circle cx="185.3" cy="520.6" r="2.1" fill="#f4f4f4"/><circle cx="185.6" cy="520.8" r="1" fill="#111"/>
<circle cx="188.8" cy="520" r="1.5" fill="#e8e8e8"/><circle cx="189" cy="520.2" r="0.7" fill="#111"/>
<path d="M186,526.5 l6,2 l4.6,3.6" stroke="#b7622a" stroke-width="1.3" fill="none"/><path d="M193.5,529.5 l3.5,2.8" stroke="#e8e8e8" stroke-width="1.6"/>
<!-- sticky -->
<path d="M222,515 L232.5,516.5 L230.5,528 L218.8,525.5Z" fill="#8fd47a"/>
<path d="M226,519 L236,519 L236,530 L225,529Z" fill="#9cc8ee"/>
<path d="M228,518.5 L238.5,516.5 L241.5,527.5 L231,531.2Z" fill="#f7e463"/>
<!-- doc -->
<rect x="266" y="512.8" width="15" height="18.6" fill="#fdfdfd" stroke="#9ab4d2" stroke-width="0.8"/>
<rect x="266" y="512.8" width="15" height="2" fill="#6a9ad2"/>
<text x="267.2" y="524.2" font-family="Liberation Serif" font-size="10" font-weight="bold" fill="#e8742a">A</text>
<path d="M275,518.5 h5 M275,520.8 h5 M275,523 h4 M268,526.5 h11 M268,528.6 h9" stroke="#5a8ace" stroke-width="0.9"/>
<path d="M265.5,531.8 h16" stroke="#dfe8f2" stroke-width="1.2"/>
<!-- control panel -->
<rect x="306.5" y="515.2" width="20.5" height="13.4" rx="1" fill="#3f9be8" stroke="#8cc6f4" stroke-width="0.8"/>
<circle cx="312" cy="520.4" r="3" fill="#f4f4f4"/><path d="M312,520.4 L312,517.4 A3,3 0 0 1 314.9,521.2Z" fill="#f09a2a"/>
<path d="M317.5,518.5 h7.5 M317.5,521.5 h7.5 M317.5,524.6 h5" stroke="#e6f2fc" stroke-width="1.4"/>
<circle cx="310" cy="525.4" r="0.9" fill="#f2d040"/><circle cx="313" cy="525.4" r="0.9" fill="#f2d040"/>
<ellipse cx="317" cy="530.6" rx="4.6" ry="2.6" fill="#d4d4d4"/><ellipse cx="317" cy="530" rx="3.6" ry="1.8" fill="#f0f0f0"/>
<!-- pizza -->
<circle cx="360.3" cy="522.4" r="10.4" fill="#f4e2c0" stroke="#f29a1c" stroke-width="1.6"/>
<path d="M360.3,522.4 L352.5,517 A9.4,9.4 0 0 1 363,513.2Z" fill="#e8502a"/>
<path d="M360,523 L363.5,531.4 A9.4,9.4 0 0 1 352,526.5Z" fill="#e8502a"/>
<path d="M352.6,518 L362,531" stroke="#f29a1c" stroke-width="0.8"/>
<path d="M361,513 L361.2,531.6" stroke="#f29a1c" stroke-width="0.8"/>
<circle cx="356.5" cy="517.6" r="1.2" fill="#a01c10"/><circle cx="358.6" cy="527.4" r="1.3" fill="#a01c10"/><circle cx="355.4" cy="525" r="1" fill="#a01c10"/>
<path d="M363.4,520 h5 M363.4,522.4 h6 M363.4,524.8 h5" stroke="#e8742a" stroke-width="0.9"/>
<!-- seamonkey -->
<circle cx="405.4" cy="522.8" r="9.6" fill="url(#smG)"/>
<path d="M396.5,521.5 q5,-2.5 9,0 q5,2.5 9.4,0.5" fill="none" stroke="#9ab8ff" stroke-width="0.8" opacity="0.8"/>
<path d="M394.2,532.2 q4,-1.6 6.2,-5.6 q1,-8 6.6,-12.4 q2.4,-1.6 3.4,0.4 q1.6,4.6 -1.6,9.6 q-3,4.4 -8,5 q-3,2.8 -6.6,3z" fill="#e6f0ff"/>
<path d="M400.5,526.5 q2,-7 7.6,-11" fill="none" stroke="#7aa0e8" stroke-width="0.7"/>
<!-- openoffice -->
<circle cx="447.2" cy="522.6" r="10.4" fill="#1c8fd6"/>
<path d="M437.5,525.5 q5,-1.6 8,0.8 q4,-4.6 11.6,-4.4 q-6,1.2 -9.6,6.4 q-3,-3 -10,-2.8z" fill="#fff"/>
<path d="M443.5,518.6 q2.8,-1 4.6,0.5 q2.6,-2.4 6.4,-2.4 q-3.4,0.8 -5.6,3.8 q-1.8,-1.8 -5.4,-1.9z" fill="#fff"/>
<!-- house -->
<path d="M480.5,518.5 L492,512.8 L501.2,520 L489.5,532.5Z" fill="#e6e6e6"/>
<path d="M480.5,518.5 L482,521 L489.8,530 L489.5,532.5Z" fill="#9a9a9a"/>
<path d="M484,519 L491.8,515.2 L498.6,520.4 L490.2,529Z" fill="#c8c0a8"/>
<path d="M484,519 L491.8,515.2 L492.2,518.6 L486,522Z" fill="#f4f4f4"/>
<path d="M491.8,515.2 L498.6,520.4 L496.4,522.6 L492.2,518.6Z" fill="#dcdcdc"/>
<rect x="491.2" y="514.2" width="1.6" height="4.4" fill="#111"/>
<path d="M486.4,523 l3.4,-1.8 l2,2.4 l-3.2,2z" fill="#e8d88a"/>
<path d="M489.5,532.5 L501.2,520 L501,522 L490.2,534Z" fill="#b4b4b4"/>
<!-- AoI -->
<path d="M536,515.6 h7.2 q1,0 1,1 v8.6 q0,1 -1,1 h-7.2z" fill="#1e78e6"/>
<path d="M536,515.6 h7.2 q1,0 1,1 v2.4 h-8.2z" fill="#5aa8ff"/>
<path d="M529,515.2 L535.6,526 q-6,2.8 -12,0z" fill="url(#cnG)"/>
<circle cx="535" cy="525.4" r="4.9" fill="url(#rdG)"/>
<!-- tray -->
<rect x="803.5" y="515.5" width="21" height="11.6" rx="1" fill="none" stroke="#fff" stroke-width="1"/>
<path d="M806,518.5 h1.6 M809,518.5 h1.6 M812,518.5 h1.6 M815,518.5 h1.6 M818,518.5 h1.6 M821,518.5 h1.4 M806,521 h1.6 M809,521 h1.6 M812,521 h1.6 M815,521 h1.6 M818,521 h1.6 M821,521 h1.4 M808,524 h12" stroke="#fff" stroke-width="1.5"/>
<ellipse cx="840.8" cy="521.6" rx="3.6" ry="4.9" fill="#1a4a9a"/>
<path d="M838.8,519.4 L842.6,523.2 L840.8,525 V518 L842.6,519.8 L838.8,523.6" fill="none" stroke="#fff" stroke-width="0.8"/>
<rect x="856.2" y="517.2" width="5.4" height="9" rx="0.8" fill="none" stroke="#fff" stroke-width="1"/><rect x="857.8" y="516" width="2.2" height="1.2" fill="#fff"/><rect x="857.4" y="520" width="3" height="5.2" fill="#fff"/>
<path d="M868.5,526 v-1.4 M870.7,526 v-2.8 M872.9,526 v-4.4 M875.1,526 v-6 M877.3,526 v-8" stroke="#fff" stroke-width="1.3"/>
<path d="M885,520 h2 l2.8,-2.6 v8.6 l-2.8,-2.6 h-2z" fill="#fff"/><path d="M891.4,519.4 q1.6,2.2 0,4.6 M893.2,518 q2.6,3.6 0,7.4" fill="none" stroke="#fff" stroke-width="0.8"/>
<text x="925.5" y="521" text-anchor="middle" font-family="Liberation Sans" font-size="8.1" fill="#fff">4:47 PM</text>
<text x="925.5" y="532" text-anchor="middle" font-family="Liberation Sans" font-size="8.1" fill="#fff">5/21/2014</text>
</svg>
</body></html>
